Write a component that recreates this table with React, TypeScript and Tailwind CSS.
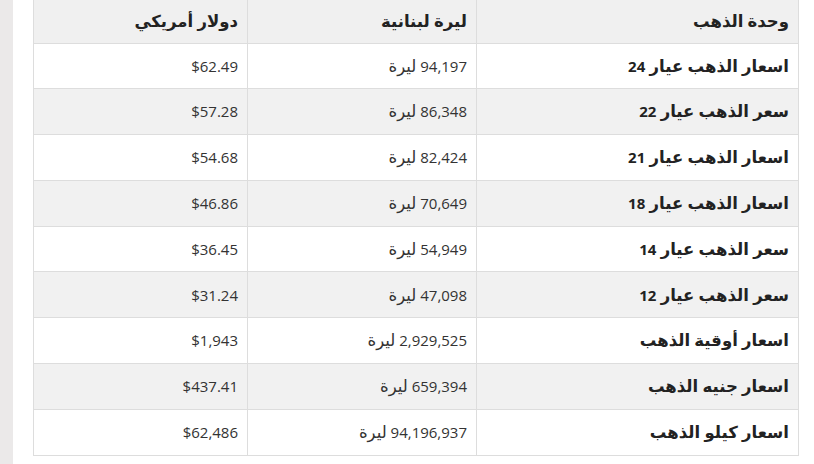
import React from "react";

const rows: [string, string, string, string][] = [
  ["اسعار الذهب عيار ", "24", "94,197", "$62.49"],
  ["سعر الذهب عيار ", "22", "86,348", "$57.28"],
  ["اسعار الذهب عيار ", "21", "82,424", "$54.68"],
  ["اسعار الذهب عيار ", "18", "70,649", "$46.86"],
  ["سعر الذهب عيار ", "14", "54,949", "$36.45"],
  ["سعر الذهب عيار ", "12", "47,098", "$31.24"],
  ["اسعار أوقية الذهب", "", "2,929,525", "$1,943"],
  ["اسعار جنيه الذهب", "", "659,394", "$437.41"],
  ["اسعار كيلو الذهب", "", "94,196,937", "$62,486"],
];

export default function App() {
  return (
    <div
      className="flex w-[814px] h-[464px] bg-white overflow-hidden"
      style={{ fontFamily: '"Open Sans", "DejaVu Sans", sans-serif' }}
    >
      <div className="w-[13px] shrink-0 bg-[#ebe9e9]" />
      <div className="pl-[20px] pt-0">
        <table
          dir="rtl"
          className="w-[765px] border-collapse text-[15px] text-[#222] table-fixed"
        >
          <colgroup>
            <col className="w-[322px]" />
            <col className="w-[229px]" />
            <col className="w-[214px]" />
          </colgroup>
          <thead>
            <tr className="bg-[#f0f0f0] h-[43px]">
              <th className="border-x border-b border-[#dddddd] text-right px-[9px] font-bold text-[16.5px]">وحدة الذهب</th>
              <th className="border-x border-b border-[#dddddd] text-right px-[9px] font-bold text-[16.5px]">ليرة لبنانية</th>
              <th className="border-x border-b border-[#dddddd] text-right px-[9px] font-bold text-[16.5px]">دولار أمريكي</th>
            </tr>
          </thead>
          <tbody>
            {rows.map((r, i) => (
              <tr key={i} className={`h-[45.8px] ${i % 2 === 1 ? "bg-[#f1f1f1]" : "bg-white"}`}>
                <td className="border border-[#dddddd] text-right px-[9px] font-bold">
                  <span className="text-[16.5px]">{r[0]}</span>
                  {r[1] && <span>{r[1]}</span>}
                </td>
                <td className="border border-[#dddddd] text-right px-[9px] text-[#333]">
                  <span>{r[2]}</span> <span className="text-[16.5px]">ليرة</span>
                </td>
                <td className="border border-[#dddddd] text-right px-[9px] text-[#333]">{r[3]}</td>
              </tr>
            ))}
          </tbody>
        </table>
      </div>
    </div>
  );
}
